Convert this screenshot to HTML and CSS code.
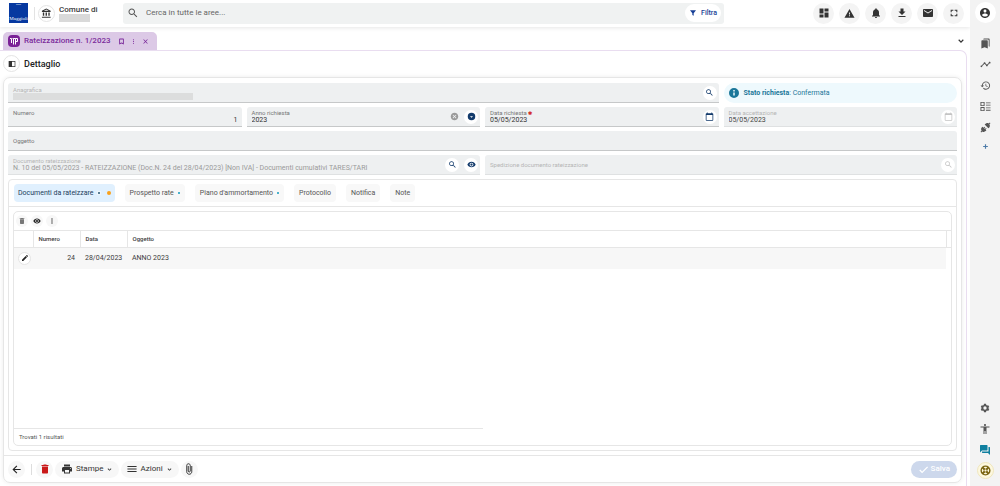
FILE: index.html
```html
<!DOCTYPE html>
<html lang="it">
<head>
<meta charset="utf-8">
<meta name="viewport" content="width=device-width, initial-scale=1">
<title>Rateizzazione n. 1/2023</title>
<link rel="stylesheet" href="styles.css">
</head>
<body>
<svg class="sprite" aria-hidden="true">
  <symbol id="search" viewBox="0 0 24 24"><path d="M15.5 14h-.79l-.28-.27C15.41 12.59 16 11.11 16 9.5 16 5.91 13.09 3 9.5 3S3 5.91 3 9.5 5.91 16 9.5 16c1.61 0 3.09-.59 4.23-1.57l.27.28v.79l5 4.99L20.49 19l-4.99-5zm-6 0C7.01 14 5 11.99 5 9.5S7.01 5 9.5 5 14 7.01 14 9.5 11.99 14 9.5 14z"/></symbol>
  <symbol id="bank" viewBox="0 0 24 24"><path d="M7 10H4v7h3v-7zm6 0h-3v7h3v-7zm8 9H2v2.500h19V19zm-2-9h-3v7h3v-7zm-7.500-6.740L16.710 6H6.290l5.210-2.740m0-2.260L2 6v2.500h19V6l-9.500-5z"/></symbol>
  <symbol id="filter" viewBox="0 0 24 24"><path d="M3 4h18l-7 9v7l-4-2v-5z"/></symbol>
  <symbol id="dashboard" viewBox="0 0 24 24"><path d="M3 13h8V3H3v10zm0 8h8v-6H3v6zm10 0h8V11h-8v10zm0-18v6h8V3h-8z"/></symbol>
  <symbol id="warning" viewBox="0 0 24 24"><path d="M1 21h22L12 2 1 21zm12-3h-2v-2h2v2zm0-4h-2v-4h2v4z"/></symbol>
  <symbol id="bell" viewBox="0 0 24 24"><path d="M12 22c1.1 0 2-.9 2-2h-4c0 1.1.89 2 2 2zm6-6v-5c0-3.07-1.64-5.64-4.5-6.32V4c0-.83-.67-1.5-1.5-1.5s-1.5.67-1.5 1.5v.68C7.63 5.36 6 7.92 6 11v5l-2 2v1h16v-1l-2-2z"/></symbol>
  <symbol id="download" viewBox="0 0 24 24"><path d="M19 9h-4V3H9v6H5l7 7 7-7zM5 18v2h14v-2H5z"/></symbol>
  <symbol id="mail" viewBox="0 0 24 24"><path d="M20 4H4c-1.1 0-1.99.9-1.99 2L2 18c0 1.1.9 2 2 2h16c1.1 0 2-.9 2-2V6c0-1.1-.9-2-2-2zm0 4l-8 5-8-5V6l8 5 8-5v2z"/></symbol>
  <symbol id="fullscreen" viewBox="0 0 24 24"><path d="M5 14H2v8h8v-3H5v-5zM2 10h3V5h5V2H2v8zm17 9h-5v3h8v-8h-3v5zM14 2v3h5v5h3V2h-8z"/></symbol>
  <symbol id="account" viewBox="0 0 24 24"><path d="M12 2C6.48 2 2 6.48 2 12s4.48 10 10 10 10-4.48 10-10S17.52 2 12 2zm0 3c1.66 0 3 1.34 3 3s-1.34 3-3 3-3-1.34-3-3 1.34-3 3-3zm0 14.2c-2.5 0-4.71-1.28-6-3.22.03-1.99 4-3.08 6-3.08 1.99 0 5.97 1.09 6 3.08-1.29 1.94-3.5 3.22-6 3.22z"/></symbol>
  <symbol id="bookmarks" viewBox="0 0 24 24"><path d="M19 18l2 1V3c0-1.1-.9-2-2-2H8.990C7.890 1 7 1.900 7 3h10c1.100 0 2 .9 2 2v13zM15 5H5c-1.100 0-2 .9-2 2v16l7-3 7 3V7c0-1.100-.9-2-2-2z"/></symbol>
  <symbol id="timeline" viewBox="0 0 24 24"><path d="M23 8c0 1.100-.9 2-2 2-.18 0-.35-.02-.51-.07l-3.560 3.550c.05.16.07.34.07.52 0 1.100-.9 2-2 2s-2-.9-2-2c0-.18.02-.36.07-.52l-2.550-2.550c-.16.05-.34.07-.52.07s-.36-.02-.52-.07l-4.550 4.560c.05.16.07.33.07.51 0 1.100-.9 2-2 2s-2-.9-2-2 .9-2 2-2c.18 0 .35.02.51.07l4.560-4.550C8.020 9.360 8 9.180 8 9c0-1.100.9-2 2-2s2 .9 2 2c0 .18-.02.36-.07.52l2.550 2.550c.16-.05.34-.07.52-.07s.36.02.52.07l3.550-3.560C19.020 8.350 19 8.180 19 8c0-1.100.9-2 2-2s2 .9 2 2z"/></symbol>
  <symbol id="history" viewBox="0 0 24 24"><path d="M13 3c-4.970 0-9 4.030-9 9H1l3.890 3.890.07.14L9 12H6c0-3.870 3.130-7 7-7s7 3.130 7 7-3.130 7-7 7c-1.930 0-3.680-.79-4.940-2.060l-1.420 1.420C8.270 19.990 10.510 21 13 21c4.970 0 9-4.030 9-9s-4.030-9-9-9zm-1 5v5l4.280 2.540.72-1.210-3.500-2.080V8H12z"/></symbol>
  <symbol id="checklist" viewBox="0 0 24 24"><path d="M1 2h9v9H1zm2 2v5h5V4zM1 13h9v9H1zm2 2v5h5v-5zM13 3h10v2H13zm0 5h10v2H13zm0 6h10v2H13zm0 5h10v2H13z" fill-rule="evenodd"/></symbol>
  <symbol id="plug" viewBox="0 0 24 24"><path d="M21.400 1.200l1.400 1.400-2.300 2.300c1.800 2.600 1.300 5.500-.7 7.500l-1.500 1.500-8.200-8.200 1.500-1.500c2-2 5-2.500 7.500-.7zM5.700 10.100l2.200 2.200 2.200-2.200 1.400 1.400-2.200 2.200 1.500 1.500 2.200-2.200 1.400 1.400-2.200 2.200 1.700 1.700-1.500 1.500c-2 2-5 2.500-7.500.7l-2.300 2.300-1.400-1.400 2.300-2.300c-1.800-2.600-1.300-5.500.7-7.500z"/></symbol>
  <symbol id="plus" viewBox="0 0 24 24"><path d="M20 14h-6v6h-4v-6H4v-4h6V4h4v6h6z"/></symbol>
  <symbol id="settings" viewBox="0 0 24 24"><path fill-rule="evenodd" d="M9.500 2h5l.5 3 2 1.200 2.800-1.100 2.500 4.300L20 11.200v1.600l2.300 1.800-2.500 4.300-2.800-1.100-2 1.200-.5 3h-5L9 19l-2-1.200-2.800 1.100-2.500-4.300L4 12.800v-1.600L1.700 9.400l2.500-4.300L7 6.200 9 5zM12 8a4 4 0 1 0 0 8 4 4 0 0 0 0-8z"/></symbol>
  <symbol id="access" viewBox="0 0 24 24"><path d="M12 2c1.100 0 2 .9 2 2s-.9 2-2 2-2-.9-2-2 .9-2 2-2zm9 7h-6v13h-2v-6h-2v6H9V9H3V7h18v2z"/></symbol>
  <symbol id="chat" viewBox="0 0 24 24"><path d="M21 6h-2v9H6v2c0 .55.45 1 1 1h11l4 4V7c0-.55-.45-1-1-1zm-4 6V3c0-.55-.45-1-1-1H3c-.55 0-1 .45-1 1v14l4-4h10c.55 0 1-.45 1-1z"/></symbol>
  <symbol id="lifebuoy" viewBox="0 0 24 24"><circle cx="12" cy="12" r="9.500" fill="none" stroke="currentColor" stroke-width="3"/><circle cx="12" cy="12" r="3" fill="none" stroke="currentColor" stroke-width="1.800"/><path d="M5 5l5 5M19 5l-5 5M5 19l5-5M19 19l-5-5" fill="none" stroke="currentColor" stroke-width="4.500"/></symbol>
  <symbol id="bookmark" viewBox="0 0 24 24"><path d="M18 2H6a2 2 0 0 0-2 2v18l8-3.500 8 3.500V4a2 2 0 0 0-2-2zm-1 15.500l-5-2.200-5 2.200V5h10z"/></symbol>
  <symbol id="more" viewBox="0 0 24 24"><path d="M12 8c1.100 0 2-.9 2-2s-.9-2-2-2-2 .9-2 2 .9 2 2 2zm0 2c-1.100 0-2 .9-2 2s.9 2 2 2 2-.9 2-2-.9-2-2-2zm0 6c-1.100 0-2 .9-2 2s.9 2 2 2 2-.9 2-2-.9-2-2-2z"/></symbol>
  <symbol id="close" viewBox="0 0 24 24"><path d="M19.500 6.100L17.900 4.500 12 10.400 6.100 4.500 4.500 6.100 10.400 12l-5.900 5.900 1.600 1.600 5.900-5.900 5.900 5.900 1.600-1.600-5.900-5.900z"/></symbol>
  <symbol id="expand" viewBox="0 0 24 24"><path d="M16.590 8L12 12.600 7.410 8 5.500 10l6.500 6.500 6.500-6.500z"/></symbol>
  <symbol id="sidebar" viewBox="0 0 24 24"><path fill-rule="evenodd" d="M2 3h20v18H2zm10 2v14h8V5z"/></symbol>
  <symbol id="info" viewBox="0 0 24 24"><path d="M12 2a10 10 0 1 0 0 20 10 10 0 0 0 0-20zm1.500 15h-3v-6h3v6zm0-8h-3V6h3v3z" fill-rule="evenodd"/></symbol>
  <symbol id="cancel" viewBox="0 0 24 24"><path d="M12 2C6.470 2 2 6.470 2 12s4.470 10 10 10 10-4.470 10-10S17.530 2 12 2zm5 13.590L15.590 17 12 13.410 8.410 17 7 15.590 10.590 12 7 8.410 8.410 7 12 10.590 15.590 7 17 8.410 13.410 12 17 15.590z"/></symbol>
  <symbol id="dropdown" viewBox="0 0 24 24"><path fill-rule="evenodd" d="M12 2a10 10 0 1 0 0 20 10 10 0 0 0 0-20zm0 13l-4-4h8z"/></symbol>
  <symbol id="calendar" viewBox="0 0 24 24"><path d="M20 3h-1V1h-2v2H7V1H5v2H4c-1.100 0-2 .9-2 2v16c0 1.100.9 2 2 2h16c1.100 0 2-.9 2-2V5c0-1.100-.9-2-2-2zm0 18H4V8h16v13z"/></symbol>
  <symbol id="eye" viewBox="0 0 24 24"><path d="M12 4.500C7 4.500 2.730 7.610 1 12c1.730 4.390 6 7.500 11 7.500s9.270-3.110 11-7.500c-1.730-4.390-6-7.500-11-7.500zM12 17c-2.760 0-5-2.240-5-5s2.240-5 5-5 5 2.240 5 5-2.240 5-5 5zm0-8c-1.660 0-3 1.340-3 3s1.340 3 3 3 3-1.340 3-3-1.340-3-3-3z"/></symbol>
  <symbol id="trash" viewBox="0 0 24 24"><path d="M6 19c0 1.100.9 2 2 2h8c1.100 0 2-.9 2-2V7H6v12zM19 4h-3.500l-1-1h-5l-1 1H5v2h14V4z"/></symbol>
  <symbol id="edit" viewBox="0 0 24 24"><path d="M3 17.250V21h3.750L17.810 9.940l-3.750-3.750L3 17.250zM20.710 7.040c.39-.39.39-1.020 0-1.410l-2.340-2.340c-.39-.39-1.020-.39-1.410 0l-1.830 1.830 3.750 3.750 1.830-1.830z"/></symbol>
  <symbol id="back" viewBox="0 0 24 24"><path d="M21 10.800H7.800l5.900-5.900L12 3.200 3.200 12l8.800 8.800 1.700-1.700-5.900-5.900H21z"/></symbol>
  <symbol id="print" viewBox="0 0 24 24"><path d="M19 8H5c-1.660 0-3 1.340-3 3v6h4v4h12v-4h4v-6c0-1.660-1.340-3-3-3zm-3 11H8v-5h8v5zm3-7c-.55 0-1-.45-1-1s.45-1 1-1 1 .45 1 1-.45 1-1 1zm-1-9H6v4h12V3z"/></symbol>
  <symbol id="menu" viewBox="0 0 24 24"><path d="M1 19h22v-2.400H1V19zM1 13.200h22v-2.400H1v2.400zM1 5v2.400h22V5H1z"/></symbol>
  <symbol id="clip" viewBox="0 0 24 24"><path d="M17.500 6v11.500c0 2.760-2.240 5-5 5s-5-2.240-5-5V5c0-1.930 1.570-3.500 3.500-3.500s3.500 1.570 3.500 3.500v11c0 1.100-.9 2-2 2s-2-.9-2-2V6" fill="none" stroke="currentColor" stroke-width="1.800"/></symbol>
  <symbol id="check" viewBox="0 0 24 24"><path d="M9 16.170L4.830 12l-2 2L9 20.200 22 7.200l-2-2z"/></symbol>
</svg>

<div class="app">
  <div class="main">
    <header class="header">
      <div class="logo"><span class="logo-dots">•••••</span><span class="logo-name">Maggioli</span></div>
      <span class="header-sep"></span>
      <button class="round bordered" aria-label="Ente"><svg class="ico i11"><use href="#bank"/></svg></button>
      <div class="entity"><span>Comune di</span><span class="entity-mask"></span></div>
      <div class="search">
        <svg class="ico i12"><use href="#search"/></svg>
        <input type="text" aria-label="Cerca" placeholder="Cerca in tutte le aree...">
        <button class="filter"><svg class="ico i8"><use href="#filter"/></svg>Filtra</button>
      </div>
      <nav class="actions" aria-label="Strumenti">
        <button class="round big" aria-label="Cruscotto"><svg class="ico i12"><use href="#dashboard"/></svg></button>
        <button class="round big" aria-label="Avvisi"><svg class="ico i11"><use href="#warning"/></svg></button>
        <button class="round big" aria-label="Notifiche"><svg class="ico i12"><use href="#bell"/></svg></button>
        <button class="round big" aria-label="Scarica"><svg class="ico i12"><use href="#download"/></svg></button>
        <button class="round big" aria-label="Messaggi"><svg class="ico i12"><use href="#mail"/></svg></button>
        <button class="round big" aria-label="Schermo intero"><svg class="ico i8"><use href="#fullscreen"/></svg></button>
      </nav>
    </header>

    <div class="doc-tabs">
      <div class="doc-tab">
        <svg class="doc-logo" viewBox="0 0 12 12"><rect width="12" height="12" rx="4"/><path d="M2 3.500h1.500V8M5.500 9.500v-6H4.500M5.500 3.500h2v6M7.500 3.500h2v3h-2"/></svg>
        <span>Rateizzazione n. 1/2023</span>
        <button class="plain" aria-label="Segnalibro"><svg class="ico i7"><use href="#bookmark"/></svg></button>
        <button class="plain" aria-label="Altro"><svg class="ico i7"><use href="#more"/></svg></button>
        <button class="plain" aria-label="Chiudi"><svg class="ico i7"><use href="#close"/></svg></button>
      </div>
      <button class="plain dark" aria-label="Espandi"><svg class="ico i10"><use href="#expand"/></svg></button>
    </div>

    <main class="page">
      <div class="title">
        <button class="round bordered" aria-label="Pannello"><svg class="ico i8"><use href="#sidebar"/></svg></button>
        <h1>Dettaglio</h1>
      </div>

      <section class="card">
        <div class="body">
          <div class="field w3 off">
            <div class="stack"><label for="anagrafica">Anagrafica</label><input id="anagrafica" class="masked" disabled></div>
            <button class="round" aria-label="Cerca anagrafica"><svg class="ico i9"><use href="#search"/></svg></button>
          </div>
          <div class="status"><svg class="ico i12"><use href="#info"/></svg><p><b>Stato richiesta</b>: Confermata</p></div>

          <div class="field"><div class="stack"><label for="numero">Numero</label><input id="numero" class="right" value="1"></div></div>
          <div class="field">
            <div class="stack"><label for="anno">Anno richiesta</label><input id="anno" value="2023"></div>
            <button class="plain grey" aria-label="Svuota"><svg class="ico i9"><use href="#cancel"/></svg></button>
            <button class="round" aria-label="Apri elenco"><svg class="ico i9"><use href="#dropdown"/></svg></button>
          </div>
          <div class="field">
            <div class="stack"><label for="richiesta">Data richiesta <b class="req">✱</b></label><input id="richiesta" value="05/05/2023"></div>
            <button class="round" aria-label="Calendario"><svg class="ico i9"><use href="#calendar"/></svg></button>
          </div>
          <div class="field off dark-value thin">
            <div class="stack"><label for="accettazione">Data accettazione</label><input id="accettazione" value="05/05/2023" disabled></div>
            <button class="round" disabled aria-label="Calendario"><svg class="ico i9"><use href="#calendar"/></svg></button>
          </div>

          <div class="field w4 empty"><div class="stack"><label for="oggetto">Oggetto</label><input id="oggetto"></div></div>

          <div class="field w2 off thin">
            <div class="stack"><label for="documento">Documento rateizzazione</label><input id="documento" disabled value="N. 10 del 05/05/2023 - RATEIZZAZIONE (Doc.N. 24 del 28/04/2023) [Non IVA] - Documenti cumulativi TARES/TARI"></div>
            <button class="round" aria-label="Cerca documento"><svg class="ico i9"><use href="#search"/></svg></button>
            <button class="round" aria-label="Vedi documento"><svg class="ico i9"><use href="#eye"/></svg></button>
          </div>
          <div class="field w2 empty off thin">
            <div class="stack"><label for="spedizione">Spedizione documento rateizzazione</label><input id="spedizione" disabled></div>
            <button class="round" disabled aria-label="Cerca spedizione"><svg class="ico i9"><use href="#search"/></svg></button>
          </div>

          <div class="panel">
            <div class="tabs" role="tablist">
              <button role="tab" class="tab active" aria-selected="true">Documenti da rateizzare<i class="dot boxed"></i><i class="dot orange"></i></button>
              <button role="tab" class="tab">Prospetto rate<i class="dot"></i></button>
              <button role="tab" class="tab">Piano d'ammortamento<i class="dot"></i></button>
              <button role="tab" class="tab">Protocollo</button>
              <button role="tab" class="tab">Notifica</button>
              <button role="tab" class="tab">Note</button>
            </div>
            <div class="grid">
              <div class="grid-tools">
                <button class="round small faded" aria-label="Elimina"><svg class="ico i8"><use href="#trash"/></svg></button>
                <button class="round small" aria-label="Visualizza"><svg class="ico i8"><use href="#eye"/></svg></button>
                <button class="round small" aria-label="Altro"><svg class="ico i8"><use href="#more"/></svg></button>
              </div>
              <table>
                <colgroup><col class="c-edit"><col class="c-num"><col class="c-date"><col><col class="c-end"></colgroup>
                <thead><tr><th></th><th>Numero</th><th>Data</th><th>Oggetto</th><th></th></tr></thead>
                <tbody><tr><td class="edit"><button class="round small bordered" aria-label="Modifica"><svg class="ico i8"><use href="#edit"/></svg></button></td><td class="num">24</td><td>28/04/2023</td><td>ANNO 2023</td><td class="end"></td></tr></tbody>
              </table>
              <div class="grid-foot">Trovati 1 risultati</div>
            </div>
          </div>
        </div>

        <footer class="footer">
          <button class="round tint" aria-label="Indietro"><svg class="ico i11"><use href="#back"/></svg></button>
          <span class="foot-sep"></span>
          <button class="round tint red" aria-label="Elimina"><svg class="ico i12"><use href="#trash"/></svg></button>
          <button class="pill"><svg class="ico i12"><use href="#print"/></svg>Stampe<svg class="ico i7"><use href="#expand"/></svg></button>
          <button class="pill"><svg class="ico i10"><use href="#menu"/></svg>Azioni<svg class="ico i7"><use href="#expand"/></svg></button>
          <button class="round tint" aria-label="Allegati"><svg class="ico i12"><use href="#clip"/></svg></button>
          <button class="save" disabled><svg class="ico i11"><use href="#check"/></svg>Salva</button>
        </footer>
      </section>
    </main>
  </div>

  <aside class="rail">
    <button class="round big user" aria-label="Profilo"><svg class="ico i12"><use href="#account"/></svg></button>
    <button class="rail-item" aria-label="Segnalibri"><svg class="ico i11"><use href="#bookmarks"/></svg></button>
    <button class="rail-item" aria-label="Andamento"><svg class="ico i11"><use href="#timeline"/></svg></button>
    <button class="rail-item" aria-label="Cronologia"><svg class="ico i11"><use href="#history"/></svg></button>
    <button class="rail-item" aria-label="Attività"><svg class="ico i11"><use href="#checklist"/></svg></button>
    <button class="rail-item" aria-label="Connessioni"><svg class="ico i11"><use href="#plug"/></svg></button>
    <button class="rail-item short blue" aria-label="Aggiungi"><svg class="ico i7"><use href="#plus"/></svg></button>
    <span class="rail-space"></span>
    <button class="rail-item" aria-label="Impostazioni"><svg class="ico i10"><use href="#settings"/></svg></button>
    <button class="rail-item" aria-label="Accessibilità"><svg class="ico i12"><use href="#access"/></svg></button>
    <button class="rail-item teal" aria-label="Chat"><svg class="ico i12"><use href="#chat"/></svg></button>
    <button class="rail-item help" aria-label="Aiuto"><svg class="ico i11"><use href="#lifebuoy"/></svg></button>
  </aside>
</div>
</body>
</html>
```
FILE: styles.css
```css
* { box-sizing: border-box; }

body {
  margin: 0;
  background: #fff;
  color: #3c3c3c;
  font: 7px/10px Roboto, "Liberation Sans", sans-serif;
}

.sprite { position: absolute; width: 0; height: 0; }

button, input { font: inherit; color: inherit; border: 0; padding: 0; margin: 0; background: none; }
button { display: inline-flex; align-items: center; justify-content: center; flex: none; cursor: pointer; }
input { outline: 0; min-width: 0; }

.ico { flex: none; display: block; fill: currentColor; }
.i7 { width: 7px; height: 7px; }
.i8 { width: 8px; height: 8px; }
.i9 { width: 9px; height: 9px; }
.i10 { width: 10px; height: 10px; }
.i11 { width: 11px; height: 11px; }
.i12 { width: 12px; height: 12px; }

.round { width: 14px; height: 14px; border-radius: 50%; background: #fff; color: #123a6b; }
.round:disabled { color: #c4c4c4; }
.bordered { width: 17px; height: 17px; border: 1px solid #e4e4e4; color: #333; }
.small { width: 12px; height: 12px; background: #f7f7f7; color: #222; }
.small.bordered { background: #fff; }
.faded { color: #777; }
.big { width: 21px; height: 21px; background: #f4f4f4; color: #333; }
.tint { width: 17px; height: 17px; background: #f7f7f7; color: #222; }
.tint.red { color: #c91818; }
.plain.grey { color: #9a9a9a; }
.plain.dark { color: #333; }

.app { display: flex; min-height: 100vh; }
.main { flex: 1; min-width: 0; display: flex; flex-direction: column; }

/* header */
.header {
  display: flex;
  align-items: center;
  height: 27px;
  padding: 0 6px 1px 9px;
  box-shadow: 0 1px 4px #0000001a;
}
.logo {
  display: flex;
  flex-direction: column;
  justify-content: space-between;
  align-items: center;
  width: 19px;
  height: 20px;
  overflow: hidden;
  background: #0638a0;
  color: #fff;
}
.logo-dots { font-size: 3px; line-height: 5px; }
.logo-name { font: 5px/8px "Liberation Serif", serif; }
.header-sep { width: 1px; height: 13px; margin: 0 3px 0 6px; background: #e3e3e3; }
.entity { display: flex; flex-direction: column; width: 68px; padding-left: 4px; font-size: 8px; line-height: 9px; font-weight: 500; }
.entity-mask { width: 31px; height: 8px; background: #d9d9d9; }
.search {
  flex: 1;
  max-width: 601px;
  display: flex;
  align-items: center;
  gap: 7px;
  height: 21px;
  padding: 0 3px 0 4px;
  border-radius: 3px;
  background: #f0f2f2;
  color: #555;
  font-size: 8px;
}
.search input { flex: 1; }
.search input::placeholder { color: #666; opacity: 1; }
.filter { gap: 4px; height: 18px; padding: 0 4px; border-radius: 9px; background: #fff; color: #173f96; font-size: 7px; font-weight: 500; }
.actions { display: flex; gap: 5px; margin-left: auto; }

/* open documents */
.doc-tabs { display: flex; justify-content: space-between; align-items: center; height: 23px; padding: 5px 4px 0 3px; }
.doc-tab {
  display: flex;
  align-items: center;
  height: 18px;
  padding: 0 8px 0 5px;
  border-radius: 5px 5px 0 0;
  background: #dcc9e6;
  color: #7b2a9b;
  font-size: 8px;
  font-weight: 500;
}
.doc-tab span { margin: 0 2px 0 4px; }
.doc-tab .plain { margin-left: 5px; }
.doc-logo { width: 12px; height: 12px; }
.doc-logo rect { fill: #7b2296; }
.doc-logo path { fill: none; stroke: #fff; stroke-width: 1; }

/* page */
.page {
  flex: 1;
  display: flex;
  flex-direction: column;
  margin-right: 3px;
  padding: 4px 4px 3px 3px;
  border: solid #e9ddf0;
  border-width: 1px 1px 0 0;
  border-radius: 0 7px 0 0;
}
.title { display: flex; align-items: center; gap: 4px; height: 17px; margin-bottom: 5px; }
.title h1 { margin: 0; font-size: 9px; font-weight: 500; color: #222; }

.card {
  flex: 1;
  display: flex;
  flex-direction: column;
  border: 1px solid #e6e6e6;
  border-radius: 7px;
  box-shadow: 0 0 4px #00000014;
}
.body {
  flex: 1;
  display: grid;
  grid-template-columns: repeat(4, minmax(0, 1fr));
  grid-template-rows: repeat(4, 20px) 1fr;
  gap: 4px 5px;
  padding: 5px 4px 4px;
}
.w2 { grid-column: span 2; }
.w3 { grid-column: span 3; }
.w4 { grid-column: span 4; }

.field {
  display: flex;
  align-items: center;
  gap: 5px;
  padding: 0 2px 0 5px;
  border-bottom: 1px solid #c6c8c9;
  border-radius: 3px 3px 0 0;
  background: #eef0f1;
}
.stack { flex: 1; display: flex; flex-direction: column; min-width: 0; }
.field label { font-size: 6px; line-height: 7px; color: #777; }
.field input { width: 100%; height: 8px; line-height: 8px; color: #333; }
.field .right { text-align: right; padding-right: 2px; }
.field.off label { color: #b5b5b5; }
.field.off input { color: #9a9a9a; }
.field.dark-value input { color: #444; }
.thin { border-bottom-color: #dfe1e2; }
.empty .stack { flex-direction: row; align-items: center; gap: 4px; }
.empty label { flex: none; }
.field .masked { width: 180px; height: 7px; background: #dcdddd; }
.req { color: #d32f2f; font-size: 5px; line-height: 5px; }

.status { display: flex; align-items: center; gap: 4px; padding-left: 4px; border-radius: 10px; background: #eef9fd; color: #1c7799; }
.status p { margin: 0; }

.panel { grid-column: span 4; display: flex; flex-direction: column; border: 1px solid #e6e6e6; border-radius: 4px; }
.tabs { display: flex; gap: 10px; padding: 4px 5px; border-bottom: 1px solid #e6e6e6; }
.tab { height: 18px; padding: 0 5px; border-radius: 4px; background: #f8f8f8; color: #555; }
.tab.active { padding: 0 4px; background: #e0f0fe; color: #1c3c5c; }
.dot { width: 2px; height: 2px; margin-left: 4px; background: #4bb2cc; }
.dot.boxed { background: #5b7f95; outline: 1px solid #eef6fc; }
.dot.orange { width: 4px; height: 4px; margin-left: 7px; border-radius: 50%; background: #f9a11b; }

.grid { flex: 1; display: flex; flex-direction: column; margin: 4px; border: 1px solid #e6e6e6; border-radius: 5px; }
.grid-tools { display: flex; align-items: center; gap: 3px; height: 18px; padding-left: 2px; }
table { width: 100%; border-collapse: collapse; table-layout: fixed; }
.c-edit { width: 19px; }
.c-num, .c-date { width: 47px; }
.c-end { width: 5px; }
th, td { padding: 0 5px; text-align: left; }
th { height: 17px; border: solid #e6e6e6; border-width: 1px 0 1px 1px; font-size: 6px; font-weight: 500; }
th:first-child { border-left: 0; }
td { height: 21px; background: #f7f7f7; }
.num { text-align: right; }
.edit { padding: 0 4px; }
.end { background: #fff; }
.edit button { width: 13px; height: 13px; vertical-align: middle; }
.grid-foot { width: 50%; margin-top: auto; padding: 3px 5px; border-top: 1px solid #e6e6e6; font-size: 6px; color: #555; }

.footer { display: flex; align-items: center; gap: 2px; height: 27px; padding: 0 4px; border-top: 1px solid #e6e6e6; }
.foot-sep { width: 1px; height: 11px; margin: 0 2px 0 4px; background: #ddd; }
.pill { gap: 3px; height: 17px; padding: 0 6px; border-radius: 9px; background: #f7f7f7; color: #333; font-size: 8px; }
.save { gap: 2px; height: 17px; margin-left: auto; padding: 0 7px; border-radius: 9px; background: #cdd8ec; color: #fff; font-size: 8px; font-weight: 500; }

/* right rail */
.rail { flex: none; display: flex; flex-direction: column; align-items: center; width: 30px; padding: 2px 0 5px; background: #f3f3f3; color: #555; }
.user { background: #fff; margin-bottom: 10px; }
.rail-item { width: 21px; height: 21px; }
.rail-item.short { height: 17px; }
.rail-item.blue { color: #4d7ba8; }
.rail-item.teal { color: #0f7f9f; }
.rail-item.help { width: 17px; height: 17px; margin: 2px 0; border: 1px solid #efe6bd; border-radius: 50%; background: #fdf8df; color: #7a6410; }
.rail-space { flex: 1; }
```
